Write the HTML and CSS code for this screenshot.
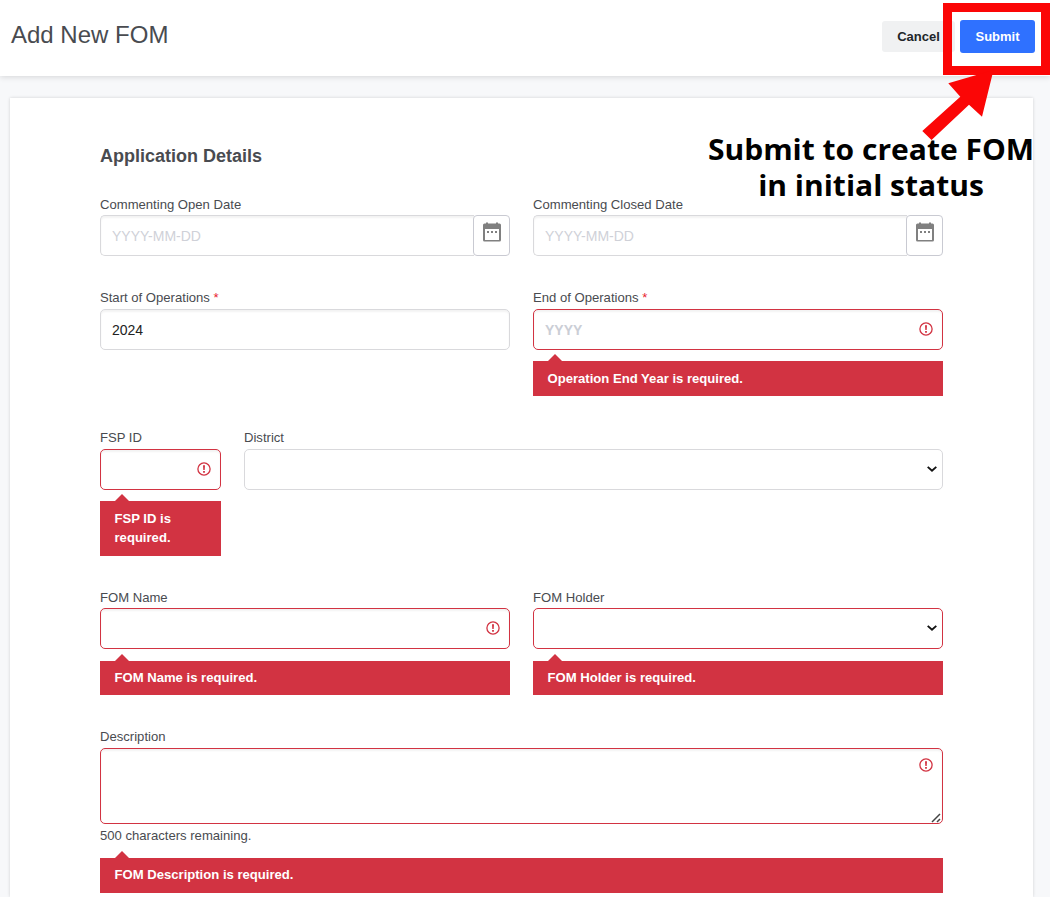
FILE: index.html
```html
<!DOCTYPE html>
<html lang="en">
<head>
<meta charset="utf-8">
<title>Add New FOM</title>
<link rel="stylesheet" href="styles.css">
</head>
<body>
<svg class="sprite" aria-hidden="true">
  <symbol id="alert" viewBox="0 0 14 14">
    <circle cx="7" cy="7" r="6.1" fill="none" stroke="#d23342" stroke-width="1.3"/>
    <path d="M6 3.200h2l-.3 4.900H6.300zM6.100 9h1.800v1.700H6.100z" fill="#d23342"/>
  </symbol>
  <symbol id="calendar" viewBox="0 0 18 20">
    <path fill="#808080" fill-rule="evenodd" d="M1.500 1.500H3V.5h2v1h8v-1h2v1h1.500A1.500 1.500 0 0 1 18 3v15a1.500 1.500 0 0 1-1.500 1.500h-15A1.500 1.500 0 0 1 0 18V3A1.500 1.500 0 0 1 1.500 1.500zM2 7v11h14V7zM4 9h2v2H4zM8 9h2v2H8zM12 9h2v2h-2z"/>
  </symbol>
  <symbol id="chevron" viewBox="0 0 10 6">
    <path d="M.7.900 5 4.700 9.300.900" fill="none" stroke="#111" stroke-width="1.900"/>
  </symbol>
</svg>

<header class="topbar">
  <h1 class="title">Add New FOM</h1>
  <div class="actions">
    <button class="btn btn-cancel">Cancel</button>
    <button class="btn btn-submit">Submit</button>
  </div>
</header>

<main class="card">
  <h2 class="section-title">Application Details</h2>

  <div class="row row-dates">
    <div class="field">
      <label class="label">Commenting Open Date</label>
      <div class="date-group">
        <input class="control" placeholder="YYYY-MM-DD">
        <button class="date-btn" aria-label="Open calendar"><svg class="calendar"><use href="#calendar"/></svg></button>
      </div>
    </div>
    <div class="field">
      <label class="label">Commenting Closed Date</label>
      <div class="date-group">
        <input class="control" placeholder="YYYY-MM-DD">
        <button class="date-btn" aria-label="Open calendar"><svg class="calendar"><use href="#calendar"/></svg></button>
      </div>
    </div>
  </div>

  <div class="row row-operations">
    <div class="field">
      <label class="label">Start of Operations <span class="required">*</span></label>
      <div class="control">2024</div>
    </div>
    <div class="field">
      <label class="label">End of Operations <span class="required">*</span></label>
      <div class="control invalid"><span class="hint">YYYY</span><svg class="alert"><use href="#alert"/></svg></div>
      <div class="error">Operation End Year is required.</div>
    </div>
  </div>

  <div class="row row-district">
    <div class="field">
      <label class="label">FSP ID</label>
      <div class="control invalid"><svg class="alert"><use href="#alert"/></svg></div>
      <div class="error">FSP ID is required.</div>
    </div>
    <div class="field">
      <label class="label">District</label>
      <div class="control select"><svg class="chevron"><use href="#chevron"/></svg></div>
    </div>
  </div>

  <div class="row row-holder">
    <div class="field">
      <label class="label">FOM Name</label>
      <div class="control invalid"><svg class="alert"><use href="#alert"/></svg></div>
      <div class="error">FOM Name is required.</div>
    </div>
    <div class="field">
      <label class="label">FOM Holder</label>
      <div class="control select invalid"><svg class="chevron"><use href="#chevron"/></svg></div>
      <div class="error">FOM Holder is required.</div>
    </div>
  </div>

  <div class="field field-description">
    <label class="label">Description</label>
    <div class="control textarea invalid">
      <svg class="alert"><use href="#alert"/></svg>
      <svg class="grip" viewBox="0 0 10 10"><path d="M1 9 9 1M6 9l3-3" fill="none" stroke="#444" stroke-width="1.500"/></svg>
    </div>
    <div class="counter">500 characters remaining.</div>
    <div class="error">FOM Description is required.</div>
  </div>
</main>

<div class="highlight"></div>
<svg class="arrow" viewBox="0 0 76 70"><path d="M2.300 61 40.300 26.700 28.300 13.300 73.500 0 62 46.700 49 34.700 11.500 70z" fill="#fb0606"/></svg>
<p class="note">Submit to create FOM<br>in initial status</p>
</body>
</html>
```

FILE: styles.css
```css
* {
  box-sizing: border-box;
}

body {
  position: relative;
  margin: 0;
  height: 897px;
  overflow: hidden;
  background: #f7f8fa;
  color: #494b50;
  font-family: "Liberation Sans", Arial, sans-serif;
  font-size: 13.1px;
}

.sprite {
  display: none;
}

.topbar {
  display: flex;
  justify-content: space-between;
  height: 76px;
  padding: 20px 15px 0 11px;
  background: #fff;
  box-shadow: 0 1px 6px rgba(0, 0, 0, 0.14);
}

.title {
  margin: 0;
  font-size: 24px;
  font-weight: 400;
  line-height: 29px;
}

.actions {
  display: flex;
  gap: 5px;
}

.btn {
  height: 33px;
  padding: 0;
  border: 0;
  border-radius: 3px;
  font: bold 13px "Liberation Sans", Arial, sans-serif;
}

.btn-cancel {
  width: 73px;
  height: 31px;
  margin-top: 1px;
  background: #f0f1f2;
  color: #212529;
}

.btn-submit {
  width: 75px;
  background: #2f71ff;
  color: #fff;
}

.card {
  height: 799px;
  margin: 22px 17px 0 10px;
  padding: 47px 90px 0;
  background: #fff;
  box-shadow: 0 0 3px rgba(0, 0, 0, 0.16);
}

.section-title {
  margin: 0 0 28px;
  font-size: 18px;
  line-height: 22px;
}

.row {
  display: grid;
  grid-template-columns: 410px 410px;
  column-gap: 23px;
}

.row-dates {
  height: 93px;
}

.row-operations {
  height: 140px;
}

.row-district {
  grid-template-columns: 121px 699px;
  height: 160px;
}

.row-holder {
  height: 139px;
}

.label {
  display: block;
  height: 21px;
  line-height: 19px;
}

.row-dates .label,
.row-holder .label {
  height: 20px;
}

.required {
  color: #e8202e;
}

.control {
  display: flex;
  align-items: center;
  width: 100%;
  height: 41px;
  padding: 0 9px 0 11px;
  border: 1px solid #d9d9dc;
  border-radius: 5px;
  background: #fff;
  box-shadow: inset 0 2px 2px rgba(0, 0, 0, 0.05);
  color: #222;
  font: 14px "Liberation Sans", Arial, sans-serif;
}

.control::placeholder {
  color: #cfd1d8;
  opacity: 1;
}

.hint {
  color: #cbced6;
  font-weight: bold;
}

.invalid {
  border-color: #d23342;
}

.select {
  padding-right: 5px;
  box-shadow: none;
}

.date-group {
  display: flex;
}

.date-group .control {
  width: 374px;
  border-right: 0;
  border-radius: 5px 0 0 5px;
}

.date-btn {
  display: flex;
  justify-content: center;
  width: 37px;
  height: 41px;
  margin-left: -1px;
  padding: 6px 0 0;
  border: 1px solid #c9cad2;
  border-radius: 4px;
  background: #fff;
}

.calendar {
  width: 18px;
  height: 20px;
}

.alert {
  width: 14px;
  height: 14px;
  margin-bottom: 1px;
  margin-left: auto;
}

.chevron {
  width: 10px;
  height: 6px;
  margin-bottom: 2px;
  margin-left: auto;
}

.error {
  position: relative;
  margin-top: 11px;
  padding: 8px 14px 8px 14.500px;
  background: #d23342;
  color: #fff;
  font-weight: bold;
  line-height: 19px;
}

.row-district .error {
  padding-bottom: 9px;
}

.error::before {
  content: "";
  position: absolute;
  top: -7px;
  left: 15px;
  border: 7.500px solid transparent;
  border-top: 0;
  border-bottom: 7px solid #d23342;
}

.row-holder .error {
  margin-top: 12px;
  padding: 7px 14px 8px 14.500px;
}

.textarea {
  position: relative;
  align-items: flex-start;
  height: 76px;
  padding-top: 9px;
}

.grip {
  position: absolute;
  right: 1px;
  bottom: 0;
  width: 10px;
  height: 10px;
}

.counter {
  padding-top: 2px;
  line-height: 19px;
}

.field-description .error {
  margin-top: 13px;
  padding-top: 7px;
  padding-bottom: 9px;
}

.highlight {
  position: absolute;
  top: 3px;
  left: 943px;
  width: 107px;
  height: 72px;
  border: 9px solid #fb0606;
}

.arrow {
  position: absolute;
  top: 70px;
  left: 920px;
  width: 76px;
  height: 70px;
}

.note {
  position: absolute;
  top: 131px;
  left: 701px;
  width: 340px;
  margin: 0;
  color: #000;
  font: bold 28.5px/36px "Open Sans", "Noto Sans", sans-serif;
  text-align: center;
  white-space: nowrap;
  transform: scaleX(1.053);
}
```
